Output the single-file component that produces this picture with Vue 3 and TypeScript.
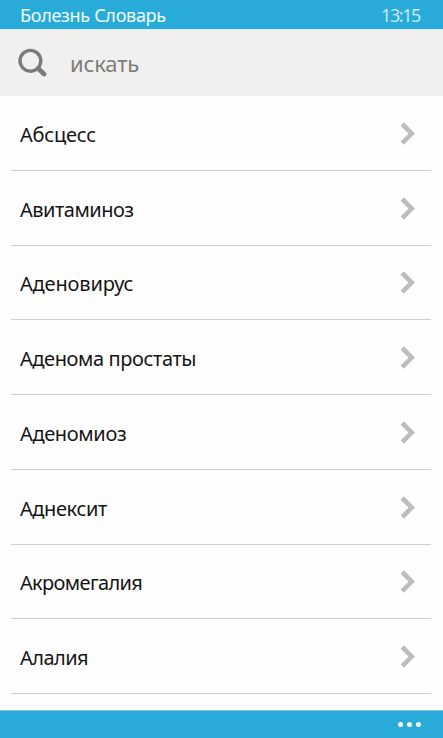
<script setup lang="ts">
interface Disease {
  name: string
  tracking: number
}

const diseases: Disease[] = [
  { name: 'Абсцесс', tracking: -0.2 },
  { name: 'Авитаминоз', tracking: -0.5 },
  { name: 'Аденовирус', tracking: -0.15 },
  { name: 'Аденома простаты', tracking: -0.4 },
  { name: 'Аденомиоз', tracking: -0.35 },
  { name: 'Аднексит', tracking: -0.4 },
  { name: 'Акромегалия', tracking: -0.65 },
  { name: 'Алалия', tracking: -0.55 },
]
</script>

<template>
  <div class="phone">
    <header class="status">
      <span class="title">Болезнь Словарь</span>
      <span class="clock">13:15</span>
    </header>
    <div class="search">
      <svg class="glass" width="30" height="30" viewBox="0 0 30 30">
        <circle cx="12.4" cy="12.8" r="10.4" fill="none" stroke="#7b7b79" stroke-width="3.4" />
        <path d="M20.2 20.6L26 26" stroke="#7b7b79" stroke-width="4.8" stroke-linecap="round" />
      </svg>
      <span class="hint">искать</span>
    </div>
    <ul class="list">
      <li v-for="d in diseases" :key="d.name" class="row">
        <span class="name" :style="{ letterSpacing: d.tracking + 'px' }">{{ d.name }}</span>
        <svg class="chevron" width="16" height="24" viewBox="0 0 16 24">
          <path d="M2.2 2L11.8 11.6L2.2 21.2" fill="none" stroke="#bdbdbd" stroke-width="4.6" />
        </svg>
      </li>
    </ul>
    <footer class="appbar">
      <i class="dot"></i><i class="dot"></i><i class="dot"></i>
    </footer>
  </div>
</template>

<style>
body {
  margin: 0;
  background: #fefefe;
}
</style>

<style scoped>
.phone {
  display: flex;
  flex-direction: column;
  width: 443px;
  height: 738px;
  overflow: hidden;
  background: #fefefe;
  font-family: "Noto Sans", "Open Sans", sans-serif;
}
.status {
  display: flex;
  flex: none;
  justify-content: space-between;
  box-sizing: border-box;
  height: 30px;
  padding: 0 23px 0 20px;
  border-bottom: 1px solid #d5edf6;
  background: #28abd9;
  line-height: 31px;
  white-space: nowrap;
}
.title {
  color: #f2fbff;
  font-size: 18px;
  letter-spacing: -0.3px;
}
.clock {
  color: #c3eafa;
  font-size: 18px;
  letter-spacing: -1.4px;
}
.search {
  display: flex;
  flex: none;
  align-items: center;
  box-sizing: border-box;
  height: 66px;
  padding-left: 18px;
  background: #f1f0ee;
}
.glass {
  flex: none;
}
.hint {
  margin-left: 22px;
  color: #7d7d7b;
  font-size: 22px;
  letter-spacing: -0.15px;
  line-height: 30px;
}
.list {
  flex: 1;
  min-height: 0;
  margin: 0;
  padding: 0 12px 0 11px;
  list-style: none;
}
.row {
  display: flex;
  align-items: center;
  justify-content: space-between;
  box-sizing: border-box;
  height: 74.75px;
  padding: 2px 15px 0 9px;
  border-bottom: 1px solid #cfcfcf;
}
.name {
  padding-top: 2px;
  color: #151515;
  font-size: 20px;
  line-height: 30px;
  white-space: nowrap;
}
.chevron {
  flex: none;
}
.appbar {
  display: flex;
  flex: none;
  align-items: center;
  justify-content: flex-end;
  gap: 4px;
  box-sizing: border-box;
  height: 28px;
  padding: 0 22px 0 0;
  border-top: 1px solid #7acae6;
  background: #28abd9;
}
.dot {
  width: 5px;
  height: 5px;
  border-radius: 50%;
  background: #fff;
}
</style>
